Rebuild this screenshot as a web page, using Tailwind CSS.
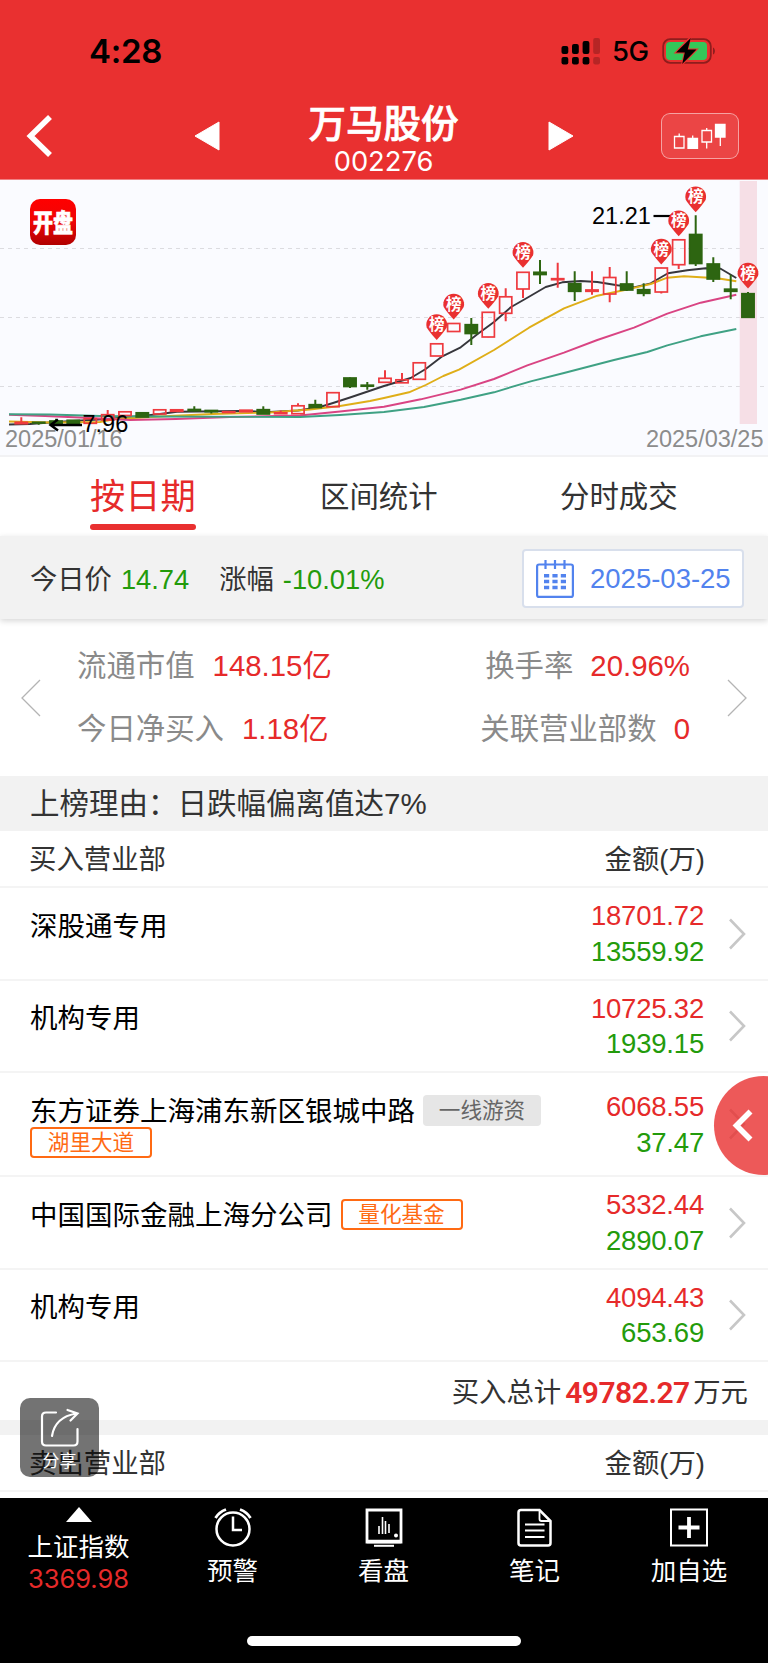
<!DOCTYPE html>
<html lang="zh-CN">
<head>
  <meta charset="UTF-8">
  <meta name="viewport" content="width=device-width, initial-scale=1.0">
  <title>万马股份 002276</title>
  <script src="https://cdn.jsdelivr.net/npm/@tailwindcss/browser@4"></script>
</head>
<body class="bg-white">
<div class="relative w-[768px] h-[1663px] overflow-hidden bg-white text-[#333] font-['Liberation_Sans','Noto_Sans_CJK_SC',sans-serif]">

  <!-- Header -->
  <header class="h-[179px] bg-[#e93030]">
    <!-- Status bar -->
    <div class="h-[102px] pl-[89px] pr-[51px] flex items-center justify-between text-black font-['Inter',sans-serif]">
      <div class="mt-[1px] text-[33px] leading-none font-semibold tracking-[-0.3px]">4:28</div>
      <div class="flex items-center">
        <svg class="w-[40px] h-[28px]" viewBox="0 0 40 28">
          <rect x="0.500" y="9" width="6.800" height="8" rx="2"/>
          <rect x="11" y="7" width="6.800" height="10" rx="2"/>
          <rect x="21.600" y="4" width="6.800" height="13" rx="2"/>
          <rect x="32.200" y="1" width="6.800" height="16" rx="2" opacity=".22"/>
          <rect x="0.500" y="20" width="6.800" height="7.600" rx="2"/>
          <rect x="11" y="20" width="6.800" height="7.600" rx="2"/>
          <rect x="21.600" y="20" width="6.800" height="7.600" rx="2"/>
          <rect x="32.200" y="20" width="6.800" height="7.600" rx="2" opacity=".22"/>
        </svg>
        <div class="ml-[11px] mt-[2px] w-[37px] text-[27.500px] leading-none tracking-[-0.500px] font-medium">5G</div>
        <svg class="ml-[13px] w-[55px] h-[28px]" viewBox="0 0 55 28">
          <rect x="1.200" y="2.200" width="47.600" height="23.600" rx="7" fill="none" stroke="#8f1d1d" stroke-width="1.800"/>
          <path d="M51 10.500c2.600 1 2.600 6 0 7z" fill="#8f1d1d"/>
          <rect x="4" y="5" width="41" height="18" rx="4" fill="#35c759"/>
          <path d="M28.500 0.500 14 15.500h9L20 27.500 34.500 12.500h-9z" stroke="#e93030" stroke-width="2"/>
          <path d="M28.800 1 14 15.500h8.800L20.200 27 34.500 12.500h-8.800z"/>
        </svg>
      </div>
    </div>

    <!-- Title bar -->
    <div class="h-[77px] flex items-center text-white">
      <svg class="ml-[26px] mt-[-9px] w-[27px] h-[42px]" viewBox="0 0 27 42"><path d="M24 2 4.500 21 24 40" fill="none" stroke="#fff" stroke-width="5.600"/></svg>
      <svg class="ml-[141px] mt-[-9px] w-[26px] h-[30px]" viewBox="0 0 26 30"><path d="M1 15 25 1v28z" fill="#fff" stroke="#fff" stroke-linejoin="round"/></svg>
      <div class="ml-[82px] mt-[-1px] w-[163px] text-center">
        <div class="text-[37.500px] leading-[42px] font-medium [-webkit-text-stroke:0.7px_#fff]">万马股份</div>
        <div class="text-[27.300px] leading-[33px] font-['Inter',sans-serif]">002276</div>
      </div>
      <svg class="ml-[83px] mt-[-9px] w-[26px] h-[30px]" viewBox="0 0 26 30"><path d="M25 15 1 1v28z" fill="#fff" stroke="#fff" stroke-linejoin="round"/></svg>
      <div class="ml-[87px] mt-[-9px] w-[78px] h-[46px] rounded-[9px] border border-white/50 bg-white/10 flex items-center justify-center">
        <svg class="w-[54px] h-[26px]" viewBox="0 0 54 26" fill="none" stroke="#fff" stroke-width="1.300">
          <path d="M1.500 13.500h9.500v11.500H1.500zM6.200 10.500v3M29 7.500h9.500v11.500H29zM33.700 5v2.500M33.700 19v6.500M47.300 14v9"/>
          <path d="M15 15.500h9.500V26H15zM42.500 1.500h9.500v12.500h-9.500z" fill="#fff"/>
          <path d="M19.700 12.500v3"/>
        </svg>
      </div>
    </div>
  </header>

  <!-- K-line chart -->
  <section class="h-[278px] bg-[#fafbff] border-b-2 border-[#f2f2f4]">
    <svg id="chart" class="block w-[768px] h-[276px]" viewBox="0 179 768 276" font-family="Liberation Sans, Noto Sans CJK SC, sans-serif">
      <defs>
        <linearGradient id="logo" x1="0" y1="0" x2="0" y2="1">
          <stop offset="0" stop-color="#ff0000"/>
          <stop offset=".5" stop-color="#ee0606"/>
          <stop offset="1" stop-color="#b00000"/>
        </linearGradient>
      </defs>
      <rect x="0" y="179" width="768" height="1" fill="#e93030" opacity=".6"/>
      <path d="M0 248.500H768M0 317.500H768M0 386.500H768" stroke="#dcdce0" stroke-width="1" stroke-dasharray="4 4"/>
      <rect x="739.700" y="181" width="17.300" height="243" fill="#f6dfe6"/>
      <rect x="30" y="199" width="46" height="46" rx="10" fill="url(#logo)"/>
      <text transform="translate(53 232) scale(1 1.270)" font-size="20" font-weight="900" text-anchor="middle" fill="#fff" stroke="#fff" stroke-width=".5">开盘</text>

      <text x="5" y="446.500" font-size="23.500" fill="#8c8c8c">2025/01/16</text>
      <text x="763.500" y="446.500" font-size="23.500" fill="#8c8c8c" text-anchor="end">2025/03/25</text>

      <!-- Moving averages -->
      <g fill="none" stroke-width="1.900" stroke-linejoin="round">
        <polyline stroke="#36363c" points="9,424.500 30,424 56,422 107,419 142,416 160,414 177,411.700 240,411 270,412 298,410.500 320,407 333,403 350,397.500 384,386 410.700,378 425.700,369 442.300,356.300 460.700,347.300 477.300,334.300 494,322 510.700,307.300 527.300,297.700 545.700,287 562.300,282.300 580.700,281 597.300,282 617.300,285.300 634,287.300 650.700,283.300 668,273.300 687.300,270.300 705.700,268.300 720.700,268.700 736.300,278"/>
        <polyline stroke="#dfae18" points="9,421.500 50,422.500 100,422 115,419 170,416 213,414 270,412.500 310,409.500 340,406 370,401 384,398 409,392.300 425.700,385 443.300,376 459,369.700 494,350 529,327.700 564,308.300 597.300,295.700 630.700,288.700 650.700,284 667.300,277.700 684,276.300 717.300,278.300 736.300,281.300"/>
        <polyline stroke="#d94483" points="9,414.700 45,416 80,417.500 130,420 176,419 230,417 300,415.500 340,411.500 384,406.700 420.700,399.300 460.700,389.700 494,379 527.300,365.300 564,352.700 597.300,340 634,327.700 667.300,313.700 700.700,302.700 736.300,294.700"/>
        <polyline stroke="#3fa184" points="9,414.300 50,414.500 100,416 150,416.500 300,417 340,415 384,412 424,407 460.700,399.700 494,392.300 530.700,381.300 564,373 614,360 647.300,352 667.300,345.300 700.700,336.300 736.300,329"/>
      </g>
      <g id="candles"></g>

      <!-- High / low marks -->
      <path d="M50 425H82M58 419.500 50.500 425 58 430.500" fill="none" stroke="#000" stroke-width="2.400"/>
      <text x="82.500" y="432" font-size="23.500">7.96</text>
      <text x="592" y="223.500" font-size="23.500">21.21</text>
      <path d="M653.500 216H671" stroke="#000" stroke-width="2.200"/>
      <g id="pins"></g>
    </svg>
  </section>

  <!-- Tabs -->
  <nav class="h-[79px] flex items-center text-[29.400px] leading-none">
    <div class="relative ml-[90px] w-[106px] h-full flex items-center text-[35.300px] text-[#e62a2a]">
      按日期
      <div class="absolute left-0 bottom-[6px] w-[106px] h-[6px] rounded-full bg-[#e93030]"></div>
    </div>
    <div class="ml-[124px] w-[118px]">区间统计</div>
    <div class="ml-[122px] w-[118px]">分时成交</div>
  </nav>

  <!-- Price bar -->
  <section class="relative h-[83px] bg-[#f2f2f2] shadow-[0_2px_6px_rgba(0,0,0,0.16)] pl-[30px] pr-6 flex items-center text-[27.300px] leading-none">
    <span class="mt-[4px]">今日价</span>
    <span class="mt-[4px] ml-[9px] text-[#239b0b]">14.74</span>
    <span class="mt-[4px] ml-[30px]">涨幅</span>
    <span class="mt-[4px] ml-[9px] text-[#239b0b]">-10.01%</span>
    <div class="ml-auto w-[222px] h-[59px] mt-[2px] bg-white border-2 border-[#d8dfec] rounded-[4px] pl-[12px] flex items-center text-[27.500px] text-[#5283ee]">
      <svg class="w-[38px] h-[38px]" viewBox="0 0 38 38" fill="none" stroke="#5283ee" stroke-width="2.200">
        <rect x="1.100" y="4.500" width="35.800" height="32.400" rx="2"/>
        <path d="M9.500 0v9M19 0v9M28.500 0v9"/>
        <path d="M8 15.700h22M8 21.500h22M8 27.500h22" stroke-width="3.600" stroke-dasharray="5.200 3.200"/>
      </svg>
      <span class="ml-[16px]">2025-03-25</span>
    </div>
  </section>

  <!-- Stats -->
  <section class="h-[157px] flex items-center justify-between px-[21px] text-[29.400px] leading-[63px] text-[#8a8a8a]">
    <svg class="w-[20px] h-[38px]" viewBox="0 0 20 38"><path d="M19 1 1 19l18 18" fill="none" stroke="#b4b4b4" stroke-width="1.300"/></svg>
    <div class="flex-1 mt-[-2px] pl-[36px] pr-[37px] flex justify-between">
      <div>
        <div>流通市值<span class="ml-[18px] text-[#e62a2a]">148.15亿</span></div>
        <div>今日净买入<span class="ml-[18px] text-[#e62a2a]">1.18亿</span></div>
      </div>
      <div class="text-right">
        <div>换手率<span class="ml-[17px] text-[#e62a2a]">20.96%</span></div>
        <div>关联营业部数<span class="ml-[17px] text-[#e62a2a]">0</span></div>
      </div>
    </div>
    <svg class="w-[20px] h-[38px]" viewBox="0 0 20 38"><path d="M1 1l18 18L1 37" fill="none" stroke="#b4b4b4" stroke-width="1.300"/></svg>
  </section>

  <div class="h-[55px] bg-[#f2f2f2] pl-[30px] flex items-center text-[29.500px] leading-none">上榜理由：日跌幅偏离值达7%</div>

  <!-- Buy side -->
  <section class="text-[27.500px]">
    <div class="h-[57px] border-b-2 border-[#f4f4f4] pt-[2px] pl-[29px] pr-[63px] flex items-center justify-between text-[27.400px] leading-none">
      <span>买入营业部</span><span>金额(万)</span>
    </div>

    <div class="h-[93px] border-b-2 border-[#f4f4f4] pl-[30px] pr-[22px] flex text-black">
      <div class="flex-1 pt-[23px] leading-[31px]">深股通专用</div>
      <div class="self-center text-right leading-[35.500px] tracking-[-0.200px]">
        <div class="text-[#e62a2a]">18701.72</div>
        <div class="text-[#239b0b]">13559.92</div>
      </div>
      <svg class="self-center ml-[25px] w-[17px] h-[32px]" viewBox="0 0 17 32"><path d="M1 1.500 15 16 1 30.500" fill="none" stroke="#c7c7c7" stroke-width="2.600"/></svg>
    </div>

    <div class="h-[92px] border-b-2 border-[#f4f4f4] pl-[30px] pr-[22px] flex text-black">
      <div class="flex-1 pt-[22px] leading-[31px]">机构专用</div>
      <div class="self-center text-right leading-[35.500px] tracking-[-0.200px]">
        <div class="text-[#e62a2a]">10725.32</div>
        <div class="text-[#239b0b]">1939.15</div>
      </div>
      <svg class="self-center ml-[25px] w-[17px] h-[32px]" viewBox="0 0 17 32"><path d="M1 1.500 15 16 1 30.500" fill="none" stroke="#c7c7c7" stroke-width="2.600"/></svg>
    </div>

    <div class="h-[104px] border-b-2 border-[#f4f4f4] pl-[30px] pr-[22px] flex text-black">
      <div class="flex-1 pt-[23px] leading-[31px]">
        <div class="flex items-center">东方证券上海浦东新区银城中路<span class="ml-[8px] mt-[-2px] w-[118px] h-[31px] rounded-[4px] bg-[#e6e6e6] text-[#666] text-[21.600px] text-center">一线游资</span></div>
        <div class="w-[122px] h-[31px] rounded-[4px] border-2 border-[#ff6a13] text-[#ff6a13] text-[21.600px] leading-[27px] text-center">湖里大道</div>
      </div>
      <div class="self-center pt-px text-right leading-[35.500px] tracking-[-0.200px]">
        <div class="text-[#e62a2a]">6068.55</div>
        <div class="text-[#239b0b]">37.47</div>
      </div>
      <svg class="self-center ml-[25px] w-[17px] h-[32px]" viewBox="0 0 17 32"><path d="M1 1.500 15 16 1 30.500" fill="none" stroke="#c7c7c7" stroke-width="2.600"/></svg>
    </div>

    <div class="h-[93px] border-b-2 border-[#f4f4f4] pl-[30px] pr-[22px] flex text-black">
      <div class="flex-1 pt-[23px] leading-[31px]">
        <div class="flex items-center">中国国际金融上海分公司<span class="ml-[8px] mt-[-2px] w-[122px] h-[31px] rounded-[4px] border-2 border-[#ff6a13] text-[#ff6a13] text-[21.600px] leading-[27px] text-center">量化基金</span></div>
      </div>
      <div class="self-center text-right leading-[35.500px] tracking-[-0.200px]">
        <div class="text-[#e62a2a]">5332.44</div>
        <div class="text-[#239b0b]">2890.07</div>
      </div>
      <svg class="self-center ml-[25px] w-[17px] h-[32px]" viewBox="0 0 17 32"><path d="M1 1.500 15 16 1 30.500" fill="none" stroke="#c7c7c7" stroke-width="2.600"/></svg>
    </div>

    <div class="h-[92px] border-b-2 border-[#f4f4f4] pl-[30px] pr-[22px] flex text-black">
      <div class="flex-1 pt-[22px] leading-[31px]">机构专用</div>
      <div class="self-center text-right leading-[35.500px] tracking-[-0.200px]">
        <div class="text-[#e62a2a]">4094.43</div>
        <div class="text-[#239b0b]">653.69</div>
      </div>
      <svg class="self-center ml-[25px] w-[17px] h-[32px]" viewBox="0 0 17 32"><path d="M1 1.500 15 16 1 30.500" fill="none" stroke="#c7c7c7" stroke-width="2.600"/></svg>
    </div>

    <div class="h-[58px] pt-[3px] pr-[20px] flex items-center justify-end text-[27.400px] leading-none">
      <span>买入总计</span>
      <span class="mx-[4px] w-[124px] text-center text-[30px] font-semibold tracking-[-0.500px] text-[#e62a2a] font-['Roboto',sans-serif]">49782.27</span>
      <span>万元</span>
    </div>
  </section>

  <!-- Sell side -->
  <section class="h-[78px] border-t-[15px] border-[#f2f2f2] text-[27.400px]">
    <div class="h-[57px] border-b-2 border-[#f4f4f4] pt-[2px] pl-[29px] pr-[63px] flex items-center justify-between leading-none">
      <span>卖出营业部</span><span>金额(万)</span>
    </div>
  </section>

  <!-- Bottom bar -->
  <footer class="relative h-[165px] bg-black text-white text-[25.500px] leading-none flex">
    <div class="w-[157px] pt-[9px] flex flex-col items-center">
      <svg class="w-[26px] h-[15px]" viewBox="0 0 26 15"><path d="M13 0 26 15H0z" fill="#fff"/></svg>
      <div class="mt-[13px]">上证指数</div>
      <div class="mt-[5px] text-[25.500px] text-[#e62a2a] font-['Inter',sans-serif]">3369.98</div>
    </div>
    <div class="w-[151px] pt-[10px] flex flex-col items-center">
      <svg class="w-[38px] h-[39px]" viewBox="0 0 38 39" fill="none" stroke="#fff" stroke-width="2.500">
        <circle cx="19" cy="21" r="16.500"/>
        <path d="M19 8.500V22h9"/>
        <path d="M1.500 10Q5 4 12 1.500M36.500 10Q33 4 26 1.500" stroke-width="2.800"/>
      </svg>
      <div class="mt-[12px]">预警</div>
    </div>
    <div class="w-[151px] pt-[10px] flex flex-col items-center">
      <svg class="w-[38px] h-[39px]" viewBox="0 0 38 39" fill="none" stroke="#fff" stroke-width="2">
        <path d="M2 34V2h34v32z" stroke-width="2.800"/>
        <path d="M2 33.500h34" stroke-width="3.400"/>
        <path d="M14 18v8M17.500 9v17M20.500 13v13M24 16v9" stroke-width="1.600"/>
        <circle cx="31" cy="27.500" r="1" fill="#fff"/>
        <path d="M9 37.800h20"/>
      </svg>
      <div class="mt-[12px]">看盘</div>
    </div>
    <div class="w-[151px] pt-[10px] flex flex-col items-center">
      <svg class="w-[38px] h-[39px]" viewBox="0 0 38 39" fill="none" stroke="#fff" stroke-width="2.500">
        <path d="M5 2h18.500L34.500 13V35q0 2.500-2.500 2.500H5Q2.500 37.500 2.500 35V4.500Q2.500 2 5 2z"/>
        <path d="M23.500 2v9q0 2 2 2h9" stroke-width="1.800"/>
        <path d="M9 16.500h19.500M9 22.500h19.500M9 29h19.500" stroke-width="2.200"/>
      </svg>
      <div class="mt-[12px]">笔记</div>
    </div>
    <div class="w-[158px] pt-[10px] flex flex-col items-center">
      <svg class="w-[38px] h-[39px]" viewBox="0 0 38 39" fill="none" stroke="#fff" stroke-width="2">
        <rect x="1" y="1.500" width="36" height="36"/>
        <path d="M19 9v21M8.500 19.500h21" stroke-width="3.800"/>
      </svg>
      <div class="mt-[12px]">加自选</div>
    </div>
    <div class="absolute left-[247px] top-[138px] w-[274px] h-[10px] rounded-full bg-white"></div>
  </footer>

  <!-- Drawer handle -->
  <div class="absolute left-[714px] top-[1076px] w-[99px] h-[99px] rounded-full bg-[#e93030]/80">
    <svg class="absolute left-[18px] top-[33px] w-[22px] h-[33px]" viewBox="0 0 22 33"><path d="M18.500 2.500 4.500 16.500l14 14" fill="none" stroke="#fff" stroke-width="5.600"/></svg>
  </div>

  <!-- Share button -->
  <div class="absolute left-[20px] top-[1398px] w-[79px] h-[79px] rounded-[10px] bg-black/55 text-white flex flex-col items-center">
    <svg class="mt-[10px] w-[40px] h-[40px]" viewBox="0 0 40 40" fill="none" stroke="#fff" stroke-width="2.200" stroke-linecap="round">
      <path d="M16 4.500H6Q2 4.500 2 8.500V33.500Q2 37.500 6 37.500H33.500Q37.500 37.500 37.500 33.500V21"/>
      <path d="M12 28Q15 9 36.500 5.500M27.500 2 37.500 5.500 30.500 12.500"/>
    </svg>
    <div class="mt-[5px] text-[17px] leading-none">分享</div>
  </div>
</div>

<script>
  // x, body top, body bottom, high, low, rising
  const candles = [
    [21.3,422.3,423.7,417.3,424,1],[38.7,422.3,423,422,424.7,0],[56,421,423.5,418.7,424,0],[73.3,420.3,423.7,420,424,0],
    [90.3,418.7,423.3,418.5,423.5,1],[107.7,414.7,420,410,420,1],[125,411.8,415.5,411.5,415.5,1],[142.3,412.8,417,412.5,417,0],
    [159.7,409.8,414,409.5,414,1],[176.7,409.8,411.3,409.5,411.5,1],[194.3,409.5,410.7,406.3,411.5,0],[211.3,410.5,411.7,410,413.5,0],
    [228.7,411.7,412.5,411.5,413,1],[246,410.2,411.7,410,412,1],[263.3,409.7,414,406.3,414,0],[280.7,412.7,413.7,410.5,414,1],
    [298,405.8,413.7,403.3,414,1],[315.3,404.7,407.5,399.7,408,0],[333,392.7,406.7,392.5,407,1],[350,378,386.5,377.5,388,0],
    [367.3,385.2,386.2,382,389.7,0],[385,378.3,382.3,370.3,382.5,1],[402,379.8,382.8,373,383,1],[419.3,362.8,379.3,362.5,379.5,1],
    [436.7,343.8,356,343.5,356,1],[453.7,323.5,331.5,323.3,331.7,1],[471.3,324.7,333.5,318,345,0],[488.3,312.3,337,312,337.3,1],
    [505.7,296.8,313.3,288.3,321.3,1],[523,272.3,289,272,298,1],[540,272.3,274.5,260,284,0],[557.7,278.7,279.7,262.7,287.7,1],
    [574.7,283.7,291.3,271.3,301,0],[592,290,291.3,271.3,294.7,1],[609.7,277.5,294,267,302.3,1],[626.7,284,290,271.3,291,0],
    [643.7,289.7,293.3,283.3,296.3,0],[661.3,268,292,267.8,293.5,1],[678.7,239.8,264.7,239.5,269,1],[695.7,234.5,263.5,215.3,266,0],
    [713.3,264,279,257.3,282,0],[730.7,289.2,291.3,274.7,299.3,0],[748,293.7,317.3,292,318,0]
  ];
  document.getElementById('candles').innerHTML = candles.map(([x, top, bottom, high, low, up]) => {
    const color = up ? '#ee3a3f' : '#2d6511';
    return `<path d="M${x} ${high}V${top}M${x} ${bottom}V${low}" stroke="${color}" stroke-width="2"/>
      <rect x="${x - 6.1}" y="${top}" width="12.2" height="${bottom - top}" fill="${up ? 'none' : color}" stroke="${color}" stroke-width="1.7"/>`;
  }).join('');

  // days on the billboard list
  const pins = [[436.7,324.5],[453.7,304],[488.3,293.3],[523,252.3],[661.3,249],[678.7,220.7],[695.7,196.7],[748,273]];
  document.getElementById('pins').innerHTML = pins.map(([x, y]) =>
    `<path d="M${x - 10} ${y + 3}A10.400 10.400 0 1 1 ${x + 10} ${y + 3}Q${x + 7} ${y + 8} ${x} ${y + 15.5}Q${x - 7} ${y + 8} ${x - 10} ${y + 3}z" fill="#e93030"/>
     <text x="${x}" y="${y + 5.5}" font-size="15.500" font-weight="bold" text-anchor="middle" fill="#fff">榜</text>`
  ).join('');
</script>
</body>
</html>
